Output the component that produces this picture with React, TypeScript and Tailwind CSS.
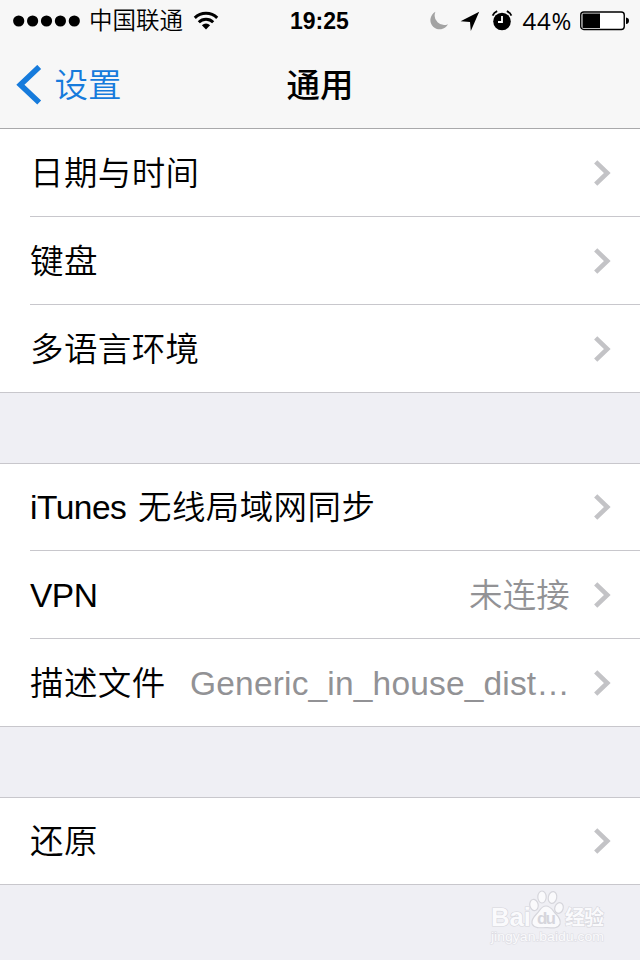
import type { ReactNode } from "react"

type RowItem = { latin?: string; label?: string; value?: string }

const groups: RowItem[][] = [
  [{ label: "日期与时间" }, { label: "键盘" }, { label: "多语言环境" }],
  [
    { latin: "iTunes", label: " 无线局域网同步" },
    { latin: "VPN", value: "未连接" },
    { label: "描述文件", value: "Generic_in_house_dist…" },
  ],
  [{ label: "还原" }],
]

function StatusBar() {
  return (
    <div className="relative flex h-[41px] items-center justify-between pl-[13px] pr-[11px] text-black">
      <div className="flex items-center">
        <svg width="68" height="14" viewBox="0 0 68 14">
          {[5.7, 19.6, 33.5, 47.4, 61.3].map((cx) => (
            <circle key={cx} cx={cx} cy="7" r="5.6" />
          ))}
        </svg>
        <span className="ml-[8px] pt-px text-[23.5px] font-[350] leading-[40px]">中国联通</span>
        <svg className="ml-[10px]" width="26" height="20" viewBox="0 0 26 20" fill="none" stroke="#000" strokeWidth="3">
          <path d="M1.8 6.9a16 16 0 0 1 22.4 0" />
          <path d="M5.8 11.2a10.3 10.3 0 0 1 14.4 0" />
          <path d="M13 18.5l-4.1-4.3a6 6 0 0 1 8.2 0z" fill="#000" stroke="none" />
        </svg>
      </div>
      <div className="absolute left-[290px] top-0 text-[23px] font-bold leading-[43px]">19:25</div>
      <div className="flex items-center">
        <svg width="20" height="20" viewBox="0 0 20 20" fill="#a3a3a3">
          <path d="M6.4 .8A9.3 9.3 0 1 0 19 13.2 9.6 9.6 0 0 1 6.4 .8z" />
        </svg>
        <svg className="ml-[11px]" width="20" height="20" viewBox="0 0 20 20">
          <path d="M19.2 .8L.6 10.2l9.4.9.8 8.8z" />
        </svg>
        <svg className="ml-[11px]" width="22" height="22" viewBox="0 0 22 22">
          <circle cx="11" cy="11.5" r="8.8" />
          <path d="M1.6 5.6Q3 2.4 6.2 1.2M20.4 5.6Q19 2.4 15.8 1.2" fill="none" stroke="#000" strokeWidth="1.8" />
          <path d="M11 6v6H7" fill="none" stroke="#fff" strokeWidth="1.8" />
        </svg>
        <span className="ml-[10px] font-['Open_Sans','Noto_Sans',sans-serif] text-[24px] font-normal leading-[41px] tracking-[0.7px]">
          44%
        </span>
        <svg className="ml-[8px]" width="49" height="20" viewBox="0 0 49 20">
          <rect x=".75" y="1" width="43.5" height="17.5" rx="3" fill="#fff" stroke="#000" strokeWidth="1.4" />
          <rect x="2.5" y="2.5" width="17.5" height="14.5" />
          <path d="M46 6.5q3 .5 3 3.3T46 13.1z" />
        </svg>
      </div>
    </div>
  )
}

function NavBar() {
  return (
    <div className="grid h-[87px] grid-cols-3 items-center">
      <div className="flex items-center text-[#167bdc]">
        <svg className="ml-[16px]" width="26" height="40" viewBox="0 0 26 40">
          <path d="M23.2 1.9L4.4 19.7l18.8 17.8" fill="none" stroke="currentColor" strokeWidth="5.6" />
        </svg>
        <span className="ml-[12.5px] pt-[2px] text-[33.5px] font-[350] leading-[86px]">设置</span>
      </div>
      <h1 className="pt-[2px] text-center text-[33.5px] font-medium leading-[86px]">通用</h1>
    </div>
  )
}

function Chevron() {
  return (
    <svg className="ml-6 mt-px shrink-0" width="17" height="26" viewBox="0 0 17 26">
      <path d="M1.7 1.9L13.3 13 1.7 24.1" fill="none" stroke="#c3c3c6" strokeWidth="4.6" />
    </svg>
  )
}

function Row({ latin, label, value, last }: RowItem & { last: boolean }) {
  return (
    <li className={last ? "" : "pl-[30px]"}>
      <div className={`flex h-[88px] items-center border-b border-[#c8c7cc] pr-[29px] ${last ? "pl-[30px]" : ""}`}>
        <span className="shrink-0 whitespace-pre pt-[3px] tracking-[0.4px] text-black">
          {latin && <span className={`tracking-[-0.5px] ${label ? "mr-[2px]" : ""}`}>{latin}</span>}
          {label}
        </span>
        <span className="ml-[20px] flex-1 whitespace-nowrap pt-[3px] text-right tracking-[0.17px] text-[#929295]">
          {value}
        </span>
        <Chevron />
      </div>
    </li>
  )
}

// the first row of a group shares its top pixel with the border above it
function Group({ children, top }: { children: ReactNode; top: boolean }) {
  return (
    <ul className={`bg-white ${top ? "" : "mt-[70px] border-t border-[#c8c7cc] *:first:-mt-px"}`}>{children}</ul>
  )
}

function Watermark() {
  return (
    <svg
      className="absolute bottom-0 right-0"
      width="170"
      height="80"
      viewBox="0 0 170 80"
      fill="#fafafc"
      stroke="#d6d6dc"
      strokeWidth="1.2"
    >
      <text x="21" y="46" fontSize="25" fontWeight="700" textLength="40" lengthAdjust="spacingAndGlyphs" paintOrder="stroke">
        Bai
      </text>
      <ellipse cx="64" cy="25" rx="4.2" ry="5.6" transform="rotate(-12 64 25)" />
      <ellipse cx="72" cy="17" rx="4.2" ry="6" />
      <ellipse cx="82.5" cy="17.5" rx="4.2" ry="6" transform="rotate(12 82.5 17.5)" />
      <ellipse cx="89" cy="28" rx="4.2" ry="5.4" transform="rotate(18 89 28)" />
      <path d="M76 26c5 0 7 5 10 8s5 6 4 10c-2 5-8 4-14 3.5-6 .5-12 1-14-4-1-4 2-7 5-10s4-7.5 9-7.5z" />
      <text x="67" y="44" fontSize="17" fontWeight="700" textLength="19" fill="#d6d6dc" stroke="none">
        du
      </text>
      <text x="95" y="45" fontSize="20" fontWeight="700" textLength="39" paintOrder="stroke">
        经验
      </text>
      <text x="21" y="61" fontSize="12.5" textLength="113" lengthAdjust="spacingAndGlyphs" stroke="#dedee4" paintOrder="stroke">
        jingyan.baidu.com
      </text>
    </svg>
  )
}

export default function App() {
  return (
    <div className="relative h-[960px] w-[640px] overflow-hidden bg-[#efeff4] font-['Liberation_Sans','Noto_Sans_CJK_SC',sans-serif]">
      <header className="border-b border-[#a9a9ab] bg-[#f7f7f7]">
        <StatusBar />
        <NavBar />
      </header>
      <main className="text-[33.5px] font-[350] leading-[50px]">
        {groups.map((rows, g) => (
          <Group key={g} top={g === 0}>
            {rows.map((row, i) => (
              <Row key={i} {...row} last={i === rows.length - 1} />
            ))}
          </Group>
        ))}
      </main>
      <Watermark />
    </div>
  )
}
